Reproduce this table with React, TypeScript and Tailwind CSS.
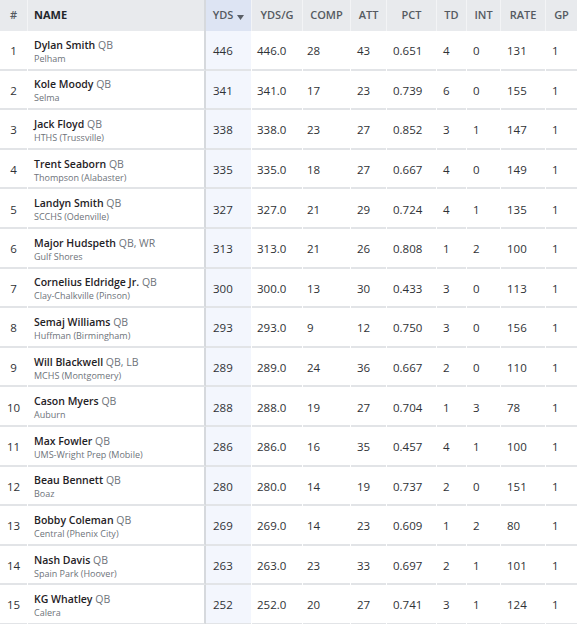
import React from "react";

type Row = {
  rank: number;
  name: string;
  pos: string;
  school: string;
  stats: string[];
};

const rows: Row[] = [
  { rank: 1, name: "Dylan Smith", pos: "QB", school: "Pelham", stats: ["446", "446.0", "28", "43", "0.651", "4", "0", "131", "1"] },
  { rank: 2, name: "Kole Moody", pos: "QB", school: "Selma", stats: ["341", "341.0", "17", "23", "0.739", "6", "0", "155", "1"] },
  { rank: 3, name: "Jack Floyd", pos: "QB", school: "HTHS (Trussville)", stats: ["338", "338.0", "23", "27", "0.852", "3", "1", "147", "1"] },
  { rank: 4, name: "Trent Seaborn", pos: "QB", school: "Thompson (Alabaster)", stats: ["335", "335.0", "18", "27", "0.667", "4", "0", "149", "1"] },
  { rank: 5, name: "Landyn Smith", pos: "QB", school: "SCCHS (Odenville)", stats: ["327", "327.0", "21", "29", "0.724", "4", "1", "135", "1"] },
  { rank: 6, name: "Major Hudspeth", pos: "QB, WR", school: "Gulf Shores", stats: ["313", "313.0", "21", "26", "0.808", "1", "2", "100", "1"] },
  { rank: 7, name: "Cornelius Eldridge Jr.", pos: "QB", school: "Clay-Chalkville (Pinson)", stats: ["300", "300.0", "13", "30", "0.433", "3", "0", "113", "1"] },
  { rank: 8, name: "Semaj Williams", pos: "QB", school: "Huffman (Birmingham)", stats: ["293", "293.0", "9", "12", "0.750", "3", "0", "156", "1"] },
  { rank: 9, name: "Will Blackwell", pos: "QB, LB", school: "MCHS (Montgomery)", stats: ["289", "289.0", "24", "36", "0.667", "2", "0", "110", "1"] },
  { rank: 10, name: "Cason Myers", pos: "QB", school: "Auburn", stats: ["288", "288.0", "19", "27", "0.704", "1", "3", "78", "1"] },
  { rank: 11, name: "Max Fowler", pos: "QB", school: "UMS-Wright Prep (Mobile)", stats: ["286", "286.0", "16", "35", "0.457", "4", "1", "100", "1"] },
  { rank: 12, name: "Beau Bennett", pos: "QB", school: "Boaz", stats: ["280", "280.0", "14", "19", "0.737", "2", "0", "151", "1"] },
  { rank: 13, name: "Bobby Coleman", pos: "QB", school: "Central (Phenix City)", stats: ["269", "269.0", "14", "23", "0.609", "1", "2", "80", "1"] },
  { rank: 14, name: "Nash Davis", pos: "QB", school: "Spain Park (Hoover)", stats: ["263", "263.0", "23", "33", "0.697", "2", "1", "101", "1"] },
  { rank: 15, name: "KG Whatley", pos: "QB", school: "Calera", stats: ["252", "252.0", "20", "27", "0.741", "3", "1", "124", "1"] },
];

// stat columns, left to right after NAME
const cols = [
  { label: "YDS", w: "w-[45px]", pad: "pl-[7px]" },
  { label: "YDS/G", w: "w-[50px] ml-px", pad: "pl-[5px]" },
  { label: "COMP", w: "w-[47px] ml-px", pad: "pl-[4px]" },
  { label: "ATT", w: "w-[35px] ml-px", pad: "pl-[6px]" },
  { label: "PCT", w: "w-[49px] ml-px", pad: "pl-[6px]" },
  { label: "TD", w: "w-[29px] ml-px", pad: "pl-[6px]" },
  { label: "INT", w: "w-[33px] ml-px", pad: "pl-[6px]" },
  { label: "RATE", w: "w-[44px] ml-px", pad: "pl-[6px]" },
  { label: "GP", w: "w-[31px] ml-px", pad: "pl-[6px]" },
];

function SortArrow() {
  return (
    <svg width="7" height="5" viewBox="0 0 7 5" className="ml-[4px] mt-[3px]">
      <polygon points="0,0 7,0 3.5,5" fill="#5a5f66" />
    </svg>
  );
}

function Header() {
  return (
    <div className="flex h-[31px] bg-[#f3f4f6] text-[11px] font-semibold text-[#555a61]">
      <div className="flex w-[27px] items-center justify-center bg-[#e8eaed]">#</div>
      <div className="ml-px flex w-[178px] items-center border-r-2 border-[#d6d9dd] bg-[#e8eaed] pl-[6px] font-bold text-[#23262a]">
        NAME
      </div>
      {cols.map((c) => (
        <div
          key={c.label}
          className={`${c.w} flex items-center justify-center ${
            c.label === "YDS" ? "bg-[#dde4f3]" : "bg-[#e8eaed]"
          }`}
        >
          {c.label}
          {c.label === "YDS" && <SortArrow />}
        </div>
      ))}
    </div>
  );
}

function StatRow({ row }: { row: Row }) {
  return (
    <div className="flex h-[39.6px] bg-white text-[11.5px] text-[#2f3236]">
      <div className="flex w-[27px] items-center justify-center border-b-2 border-[#e2e4e7] pt-[2px]">
        {row.rank}
      </div>
      <div className="ml-px flex w-[178px] flex-col justify-center border-b-2 border-r-2 border-[#e2e4e7] border-r-[#d6d9dd] pl-[6px] pt-[3px]">
        <div className="whitespace-nowrap text-[10.5px] leading-[15px] font-semibold text-[#1f2226]">
          {row.name} <span className="font-normal text-[#6e737a]">{row.pos}</span>
        </div>
        <div className="whitespace-nowrap text-[9px] leading-[12px] text-[#6e737a]">{row.school}</div>
      </div>
      {cols.map((c, i) => (
        <div
          key={c.label}
          className={`${c.w} ${c.pad} flex items-center border-b-2 border-[#e2e4e7] pt-[2px] ${
            i === 0 ? "bg-[#f3f6fd]" : ""
          }`}
        >
          {row.stats[i]}
        </div>
      ))}
    </div>
  );
}

export default function App() {
  return (
    <div className="w-[577px] bg-white" style={{ fontFamily: '"Open Sans", "Noto Sans", sans-serif' }}>
      <Header />
      {rows.map((r) => (
        <StatRow key={r.rank} row={r} />
      ))}
    </div>
  );
}
